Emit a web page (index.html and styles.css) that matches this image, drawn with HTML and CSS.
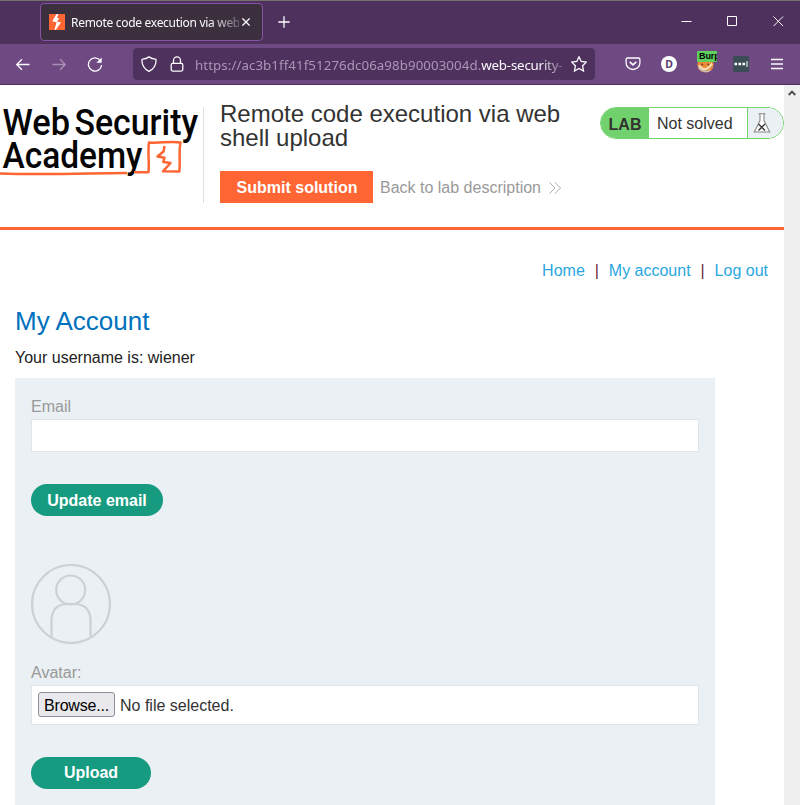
FILE: index.html
```html
<!DOCTYPE html>
<html lang="en">
<head>
<meta charset="utf-8">
<title>Remote code execution via web shell upload</title>
<link rel="stylesheet" href="styles.css">
</head>
<body>
<div class="window">
  <div class="tabbar">
    <div class="tab">
      <svg class="favicon" viewBox="0 0 16 16"><rect width="16" height="16" fill="#ff6633"/><path d="M7.600 0 3.200 7.200 7.600 8.200 5.400 15.800 6.800 15.800 12 8.600 8 7.400 10.200 4.400 8 3.700 9.500 0z" fill="#fff"/></svg>
      <span class="tab-title">Remote code execution via web</span>
      <svg class="tab-close" viewBox="0 0 8 8"><path d="M.4.4l7.200 7.200M7.600.4.4 7.600"/></svg>
    </div>
    <svg class="new-tab" viewBox="0 0 12 12"><path d="M6 .3v11.400M.3 6h11.400"/></svg>
    <div class="window-controls">
      <svg viewBox="0 0 11 11"><path d="M.5 5.500h10"/></svg>
      <svg viewBox="0 0 11 11"><path d="M.5.5h9v9h-9z"/></svg>
      <svg viewBox="0 0 11 11"><path d="M.5.5l9.600 9.600M10.100.5.5 10.100"/></svg>
    </div>
  </div>
  <div class="toolbar">
    <svg class="nav-icon" viewBox="0 0 16 16"><path d="M1.500 8.500h13M7 3.200 1.700 8.500 7 13.800"/></svg>
    <svg class="nav-icon disabled" viewBox="0 0 16 16"><path d="M1.500 8.500h13M9 3.200 14.300 8.500 9 13.800"/></svg>
    <svg class="nav-icon" viewBox="0 0 16 16"><path d="M13.500 4.800A6.600 6.600 0 1 0 14.600 9"/><path d="M14.700 1.500v5.300H9.400z" fill="#fbfbfe" stroke="none"/></svg>
    <div class="urlbar">
      <svg class="url-icon" viewBox="0 0 16 16"><path d="M8 .9C6 2.300 4 3 1.600 3.100c-.5 0-.7.3-.7.800C1 9 3.300 13 8 15.300c4.700-2.300 7-6.300 7.100-11.400 0-.5-.2-.8-.7-.800C12 3 10 2.300 8 .9z"/></svg>
      <svg class="url-icon lock" viewBox="0 0 16 16"><rect x="2.200" y="7.400" width="11.600" height="7.700" rx="1.500"/><path d="M4.500 7.400V4.500a3.500 3.700 0 0 1 7 0v2.900"/></svg>
      <span class="url">https://ac3b1ff41f51276dc06a98b90003004d.<b>web-security-</b></span>
      <svg class="star" viewBox="0 0 16 16"><path d="M8 .8l2.200 4.700 5.100.6-3.700 3.600.9 5.300L8 12.500 3.500 15l.9-5.300L.7 6.100l5.100-.6z"/></svg>
    </div>
    <div class="extensions">
      <svg viewBox="0 0 16 16"><path d="M2.600 2h10.800a1.500 1.500 0 0 1 1.500 1.500V7A6.900 6.500 0 0 1 1.100 7V3.500A1.500 1.500 0 0 1 2.600 2z"/><path d="M4.700 5.800 8 8.900l3.300-3.100" stroke-width="1.600"/></svg>
      <span class="badge-d">D</span>
      <span class="fox"><svg viewBox="0 0 18 18"><circle cx="9" cy="9" r="8.600" fill="#e98a37" stroke="none"/><path d="M2 10q6 9 14-2" stroke="#f7d9b3" stroke-width="2.500"/><path d="M2 13q6 6 12 2" stroke="#b8c4cc"/><path d="M4.500 9h2M11 9h2" stroke="#703d20" stroke-width="1.600"/></svg><span class="fox-label">Burp</span></span>
      <svg viewBox="0 0 16 16"><rect width="16" height="16" rx="1.500" fill="#3c4c57" stroke="none"/><path d="M1.500 6.700h2.600v2.600H1.500zM5.500 6.700h2.600v2.600H5.500zM9.500 6.700h2.600v2.600H9.500zM13.500 5h1v6h-1z" fill="#fff" stroke="none"/></svg>
      <svg class="menu" viewBox="0 0 12 12"><path d="M0 1.500h12M0 6h12M0 10.500h12"/></svg>
    </div>
  </div>
  <div class="viewport">
    <main class="page">
      <header class="lab-header">
        <svg class="logo" viewBox="0 0 203 96">
          <g class="logo-text">
            <text x="2.500" y="28.300" textLength="67.500" lengthAdjust="spacingAndGlyphs">Web</text>
            <text x="74.500" y="28.300" textLength="123.500" lengthAdjust="spacingAndGlyphs">Security</text>
            <text x="2.500" y="60.800" textLength="140" lengthAdjust="spacingAndGlyphs">Academy</text>
          </g>
          <path d="M0 66.500C40 68 80 66.500 127 66" class="mark"/>
          <path d="M134 65.300 148.500 65.200C149.500 55 147.500 45 149 35.500 160 36.500 170 34 180.500 35.500 178.500 45 180.500 55 179.300 64.500L163 64.300 170.500 56 163.300 55 164.500 50.700 157.500 49.500 163.500 44.500 164.500 39" class="mark"/>
        </svg>
        <div class="lab-info">
          <h1>Remote code execution via web shell upload</h1>
          <div class="lab-actions">
            <a class="submit">Submit solution</a>
            <a class="back">Back to lab description <svg viewBox="0 0 12 12"><path d="M.5.5 6 6 .5 11.500M6 .5 11.500 6 6 11.500"/></svg></a>
          </div>
        </div>
        <div class="lab-status">
          <strong>LAB</strong><span>Not solved</span>
          <i><svg viewBox="0 0 18 20"><path d="M5.500.7h7M7 1v6.500L1.300 19h15.400L11 7.500V1" class="flask"/><path d="M5.500 11 12 17.500M12 11 5.500 17.500" class="cross"/></svg></i>
        </div>
      </header>
      <nav class="links"><a>Home</a><span>|</span><a>My account</a><span>|</span><a>Log out</a></nav>
      <section class="account">
        <h2>My Account</h2>
        <p>Your username is: wiener</p>
        <div class="panel">
          <label>Email</label>
          <div class="field"></div>
          <button>Update email</button>
          <svg class="avatar" viewBox="0 0 80 80"><circle cx="40" cy="40" r="39"/><circle cx="39.700" cy="26" r="14.500"/><path d="M20.500 73V57Q20.500 40 37 40h6Q59.500 40 59.500 57v16"/></svg>
          <label>Avatar:</label>
          <div class="field file"><span class="browse">Browse...</span><span>No file selected.</span></div>
          <button class="upload">Upload</button>
        </div>
      </section>
    </main>
    <div class="scrollbar"><svg viewBox="0 0 8 6"><path d="M.7 5 4 1.600 7.300 5"/></svg></div>
  </div>
</div>
</body>
</html>
```
FILE: styles.css
```css
* { box-sizing: border-box; }
body { margin: 0; overflow: hidden; font-family: "Liberation Sans", Arial, sans-serif; font-size: 16px; color: #222; background: #fff; }
svg { display: block; fill: none; flex: none; }
.window { height: 805px; display: flex; flex-direction: column; overflow: hidden; }

.tabbar { height: 44px; flex: none; display: flex; align-items: flex-start; background: #4f315e; border-top: 1px solid #76716f; padding: 2px 16px 0 40px; font-family: "Noto Sans", sans-serif; }
.tabbar svg, .toolbar svg { stroke: #fbfbfe; stroke-width: 1.3; }
.tabbar .favicon { width: 16px; height: 16px; stroke: none; }
.tab { width: 223px; height: 38px; border: 1px solid #8652a4; border-radius: 4px; background: #3c303f; display: flex; align-items: center; padding: 0 12px 0 8px; }
.tab-title { margin: 1px 0 0 6px; width: 168px; flex: none; overflow: hidden; white-space: nowrap; font-size: 12px; letter-spacing: -.3px; color: #fbfbfe; -webkit-mask-image: linear-gradient(to right, #000 138px, transparent 178px); mask-image: linear-gradient(to right, #000 138px, transparent 178px); }
.tab-close { width: 8px; height: 8px; margin-left: 3px; }
.new-tab { width: 12px; height: 12px; margin: 13px 0 0 15px; }
.window-controls { margin: 13px 0 0 auto; display: flex; gap: 35px; }
.window-controls svg { width: 11px; height: 11px; stroke-width: 1; }

.toolbar { height: 41px; flex: none; background: #6f4a82; border-bottom: 1px solid #4f315e; display: flex; align-items: center; padding: 0 17px 0 15px; font-family: "Noto Sans", sans-serif; }
.nav-icon { width: 16px; height: 16px; margin-right: 20px; }
.nav-icon.disabled { opacity: .4; }
.urlbar { width: 462px; height: 32px; margin-left: 10px; background: #4f315e; border-radius: 4px; display: flex; align-items: center; padding: 0 8px; flex: none; }
.url-icon { width: 16px; height: 16px; }
.lock { margin-left: 12px; }
.url { margin: 2px 0 0 10px; width: 369px; overflow: hidden; white-space: nowrap; font-size: 13.300px; letter-spacing: .075px; color: #ab96b6; flex: none; -webkit-mask-image: linear-gradient(to right, #000 344px, transparent 376px); mask-image: linear-gradient(to right, #000 344px, transparent 376px); }
.url b { font-weight: 400; letter-spacing: -.2px; color: #fbfbfe; }
.star { width: 16px; height: 16px; margin-left: 7px; }
.extensions { margin-left: auto; display: flex; align-items: center; gap: 20px; }
.extensions > svg { width: 16px; height: 16px; }
.extensions > .menu { width: 12px; height: 12px; margin-left: 2px; }
.badge-d { width: 16px; height: 16px; border-radius: 50%; background: #fff; color: #5c3a6d; font: bold 10.500px/16px "Noto Sans", sans-serif; text-align: center; }
.fox { position: relative; width: 16px; height: 16px; }
.fox > svg { width: 17px; height: 17px; }
.fox-label { position: absolute; left: 0; top: -5px; width: 20px; height: 11px; overflow: hidden; padding-left: 2px; background: #60d060; border-radius: 1px; color: #000; font: bold 9px/11px "Liberation Sans", sans-serif; letter-spacing: -.1px; }

.viewport { flex: 1; display: flex; min-height: 0; }
.page { width: 784px; overflow: hidden; }
.scrollbar { width: 16px; background: #efefef; padding: 5px 0 0 4px; }
.scrollbar svg { width: 8px; height: 6px; stroke: #505050; stroke-width: 2; }

.lab-header { height: 145px; border-bottom: 3px solid #ff6633; display: flex; align-items: flex-start; padding-top: 22px; }
.logo { width: 204px; height: 96px; border-right: 1px solid #e0e0e0; overflow: visible; }
.logo-text { font-family: Roboto, sans-serif; font-size: 37.500px; font-weight: 500; fill: #050505; }
.mark { stroke: #ff6633; stroke-width: 2.500; stroke-linejoin: round; }
.lab-info { margin: -5px 0 0 16px; width: 364px; }
h1 { margin: 0; font-size: 24px; line-height: 24px; font-weight: 400; color: #333332; }
.lab-actions { display: flex; margin-top: 21px; line-height: 34px; }
.submit { width: 153px; height: 32px; padding-left: 1px; background: #ff6633; color: #fff; font-weight: 700; text-align: center; }
.back { height: 32px; margin-left: 7px; padding-top: 1px; color: #999; display: flex; align-items: center; white-space: nowrap; }
.back svg { width: 12px; height: 12px; margin-left: 8px; stroke: #aaa; stroke-width: 1; }
.lab-status { margin-left: 16px; width: 184px; height: 32px; border: 1px solid #71d16c; border-radius: 16px; display: flex; overflow: hidden; line-height: 31px; flex: none; }
.lab-status strong { width: 48px; background: #71d16c; color: #333332; text-align: center; line-height: 33px; }
.lab-status span { width: 98px; padding-left: 8px; color: #333332; }
.lab-status i { flex: 1; background: #eaf0f3; border-left: 1px solid #71d16c; padding: 5px 0 0 5px; }
.lab-status i svg { width: 18px; height: 20px; }
.flask { stroke: #888; fill: #fff; stroke-width: 1.100; }
.cross { stroke: #333; stroke-width: 1.300; }

.links { display: flex; justify-content: flex-end; gap: 11px; padding: 32px 16px 0 0; line-height: 18px; color: #6b1f35; }
.links span { width: 2px; text-indent: -1px; }
.links a { color: #29a7df; }
.account { padding-left: 15px; }
h2 { margin: 25px 0 0; font-size: 26px; line-height: 32px; font-weight: 400; color: #0071bc; }
p { margin: 11px 0; line-height: 19px; }
.panel { width: 700px; height: 440px; background: #eaf0f3; padding: 19px 16px; }
label { display: block; height: 22px; line-height: 19px; color: #999; }
.field { height: 33px; background: #fff; border: 1px solid #e1e4e6; }
button { display: block; width: 132px; height: 32px; margin-top: 32px; padding: 1px 0 0; border: 0; border-radius: 16px; background: #179b80; color: #fff; font: bold 16px/32px "Liberation Sans", sans-serif; }
.avatar { width: 80px; height: 80px; margin: 48px 0 19px; stroke: #ccd2d3; stroke-width: 2.200; }
.file { height: 40px; display: flex; align-items: center; padding: 0 6px 1px; color: #333; line-height: 20px; }
.file span:last-child { padding-top: 2px; }
.browse { width: 77px; height: 25px; margin-right: 5px; border: 1px solid #8f8f9d; border-radius: 3px; background: #e9e9ed; color: #000; text-align: center; line-height: 25px; letter-spacing: -.2px; }
.upload { width: 120px; padding: 0; }
```
